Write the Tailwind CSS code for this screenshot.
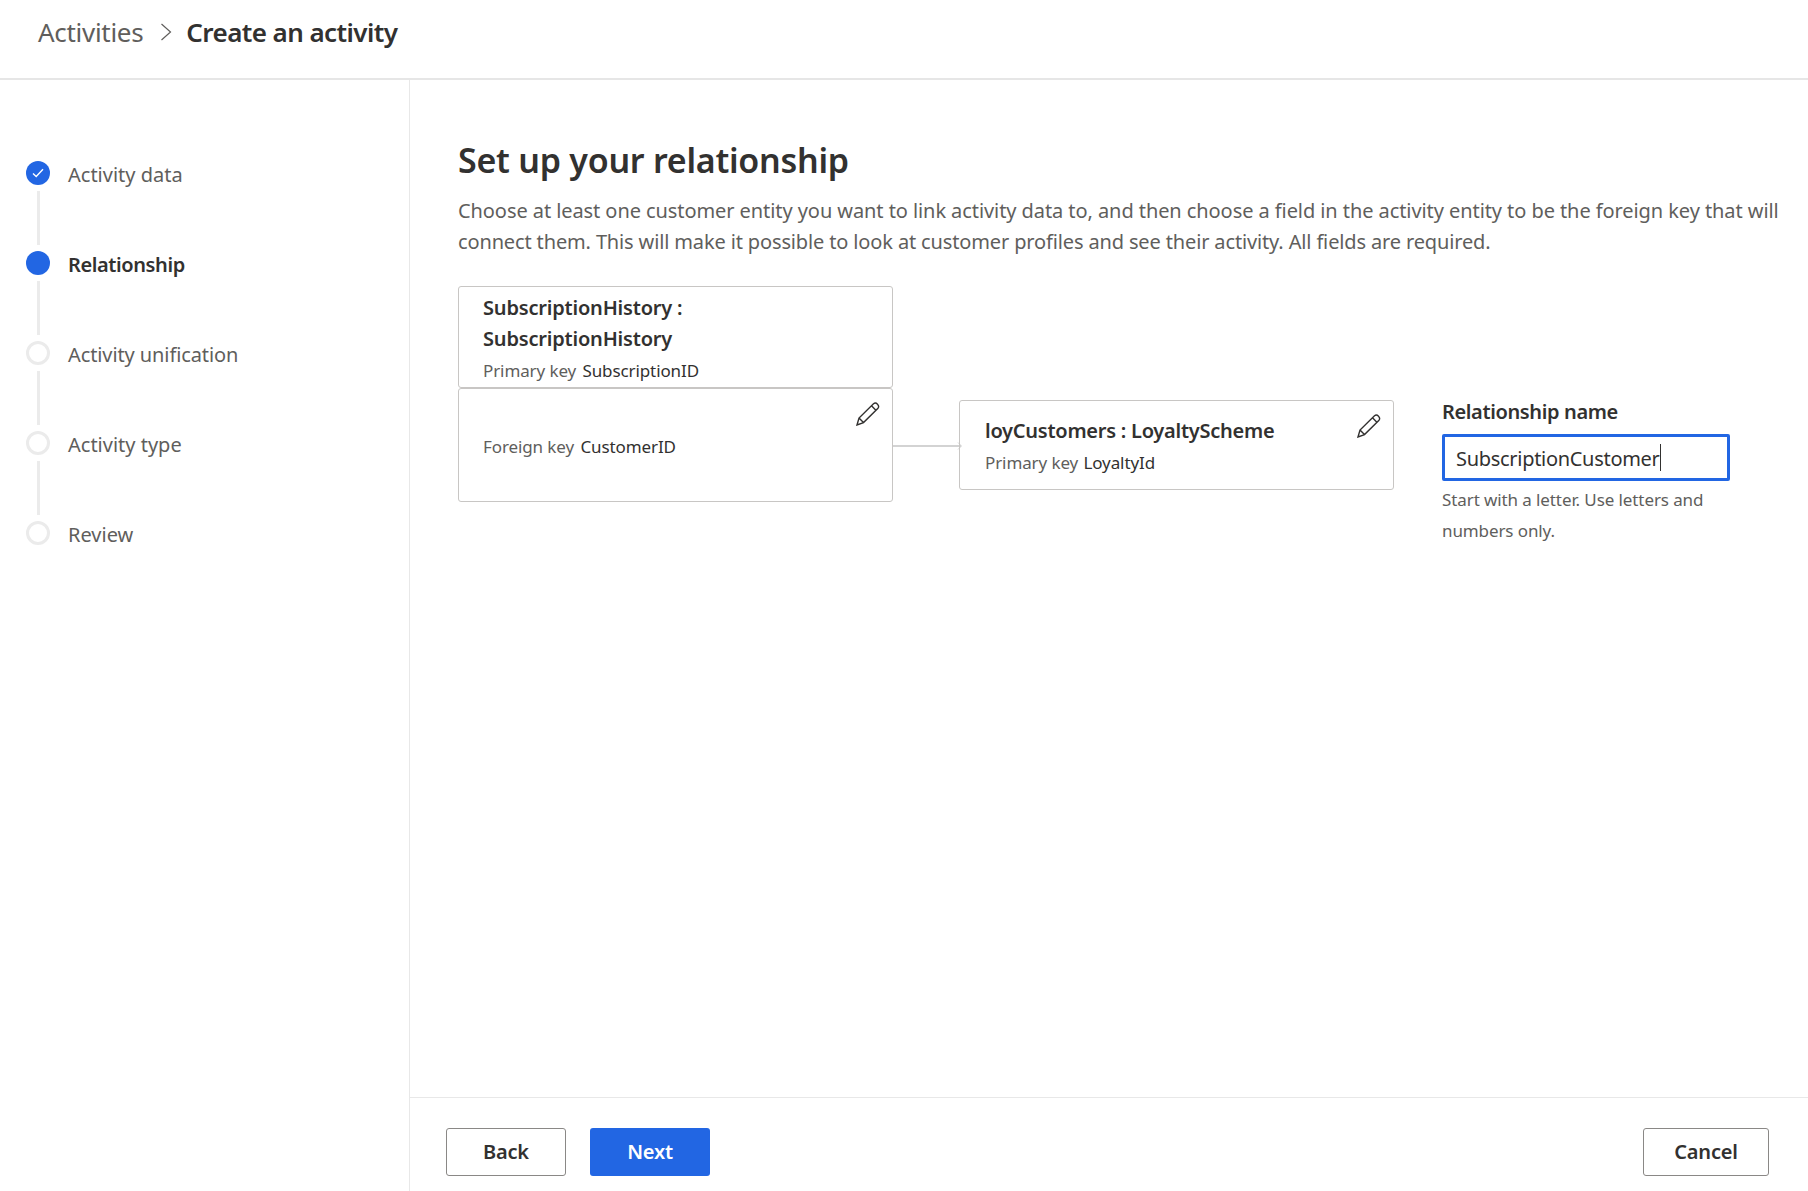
<!DOCTYPE html>
<html lang="en">
<head>
    <meta charset="UTF-8">
    <title>Create an activity</title>
    <script src="https://cdn.jsdelivr.net/npm/@tailwindcss/browser@4"></script>
</head>
<body class="bg-white font-['Noto_Sans','Open_Sans',sans-serif] text-[#323130]">
    <div class="flex h-[1191px] w-[1808px] flex-col overflow-hidden">

        <!-- Breadcrumb -->
        <header class="flex h-[80px] items-center border-b-2 border-[#e6e6e6] pb-[14px] pl-[38px] text-[26px]">
            <span class="tracking-[-0.3px] text-[#605e5c]">Activities</span>
            <svg class="ml-[17px] mr-[14px] h-[18px] w-[12px]" viewBox="0 0 12 18" fill="none" stroke="#605e5c" stroke-width="1.2"><path d="M1.5 1l9 8-9 8"/></svg>
            <span class="font-semibold tracking-[-0.58px]">Create an activity</span>
        </header>

        <div class="flex min-h-0 flex-1">

            <!-- Steps -->
            <aside class="w-[410px] shrink-0 border-r border-[#e8e8e8] pl-[26px] pt-[81px] text-[20px] text-[#605e5c]">
                <div class="flex h-[24px] items-center gap-[18px]">
                    <span class="flex h-[24px] w-[24px] items-center justify-center rounded-full bg-[#2266e3]">
                        <svg class="h-[10px] w-[12px]" viewBox="0 0 12 10" fill="none" stroke="#fff" stroke-width="1.4"><path d="M1 5.5l3.2 3L11 1.2"/></svg>
                    </span>
                    <span class="pt-[4px]">Activity data</span>
                </div>
                <div class="my-[6px] ml-[11px] h-[54px] w-[3px] bg-[#ebebeb]"></div>
                <div class="flex h-[24px] items-center gap-[18px]">
                    <span class="h-[24px] w-[24px] rounded-full bg-[#2266e3]"></span>
                    <span class="pt-[4px] font-semibold tracking-[-0.4px] text-[#323130]">Relationship</span>
                </div>
                <div class="my-[6px] ml-[11px] h-[54px] w-[3px] bg-[#ebebeb]"></div>
                <div class="flex h-[24px] items-center gap-[18px]">
                    <span class="h-[24px] w-[24px] rounded-full border-[3px] border-[#ebebeb]"></span>
                    <span class="pt-[4px] tracking-[-0.1px]">Activity unification</span>
                </div>
                <div class="my-[6px] ml-[11px] h-[54px] w-[3px] bg-[#ebebeb]"></div>
                <div class="flex h-[24px] items-center gap-[18px]">
                    <span class="h-[24px] w-[24px] rounded-full border-[3px] border-[#ebebeb]"></span>
                    <span class="pt-[4px]">Activity type</span>
                </div>
                <div class="my-[6px] ml-[11px] h-[54px] w-[3px] bg-[#ebebeb]"></div>
                <div class="flex h-[24px] items-center gap-[18px]">
                    <span class="h-[24px] w-[24px] rounded-full border-[3px] border-[#ebebeb]"></span>
                    <span class="pt-[4px]">Review</span>
                </div>
            </aside>

            <main class="flex min-w-0 flex-1 flex-col">
                <div class="flex-1 pl-[48px] pt-[56px]">
                    <h1 class="text-[34px] font-semibold leading-[48px] tracking-[-0.25px]">Set up your relationship</h1>
                    <p class="mt-[11px] w-[1340px] text-[20px] leading-[31px] text-[#605e5c]">
                        <span class="block tracking-[-0.075px]">Choose at least one customer entity you want to link activity data to, and then choose a field in the activity entity to be the foreign key that will</span>
                        <span class="block tracking-[-0.14px]">connect them. This will make it possible to look at customer profiles and see their activity. All fields are required.</span>
                    </p>

                    <div class="mt-[29px] flex items-start">
                        <div class="w-[435px]">
                            <div class="h-[102px] rounded-[3px] border border-[#c8c6c4] pl-[24px] pt-[5px] leading-[31px]">
                                <div class="w-[260px] text-[20px] font-semibold tracking-[-0.19px]">SubscriptionHistory : SubscriptionHistory</div>
                                <div class="mt-[1px] text-[17px] tracking-[-0.1px] text-[#605e5c]">Primary key <span class="ml-[2px] text-[#323130]">SubscriptionID</span></div>
                            </div>
                            <div class="relative flex h-[114px] items-center rounded-[3px] border border-[#c8c6c4] pl-[24px] pt-[4px] text-[17px] tracking-[-0.1px] text-[#605e5c]">
                                <div>Foreign key <span class="ml-[2px] text-[#323130]">CustomerID</span></div>
                                <svg class="absolute right-[12px] top-[13px] h-[24px] w-[24px]" viewBox="0 0 24 24" fill="none" stroke="#323130" stroke-width="1.4"><path d="M1 23l2-7L17.5 1.8q2-1.6 4 .4t.5 4L7.5 20.6zM3 16l4.5 4.6M15.5 3.8l4.6 4.6"/></svg>
                            </div>
                        </div>

                        <svg class="mt-[151px] h-[16px] w-[66px] shrink-0 overflow-visible" viewBox="0 0 66 16" fill="none"><path d="M0 9h68" stroke="#c4c4c4" stroke-width="1.5"/><path d="M65 5.5l3.5 3.5L65 12.5" stroke="#d4d4d4"/></svg>

                        <div class="relative mt-[114px] h-[90px] w-[435px] rounded-[3px] border border-[#c8c6c4] pl-[25px] pt-[14px] leading-[31px]">
                            <div class="text-[20px] font-semibold tracking-[-0.25px]">loyCustomers : LoyaltyScheme</div>
                            <div class="mt-[1px] text-[17px] tracking-[-0.1px] text-[#605e5c]">Primary key <span class="ml-[1px] text-[#323130]">LoyaltyId</span></div>
                            <svg class="absolute right-[12px] top-[13px] h-[24px] w-[24px]" viewBox="0 0 24 24" fill="none" stroke="#323130" stroke-width="1.4"><path d="M1 23l2-7L17.5 1.8q2-1.6 4 .4t.5 4L7.5 20.6zM3 16l4.5 4.6M15.5 3.8l4.6 4.6"/></svg>
                        </div>

                        <div class="ml-[48px] mt-[110px] w-[288px]">
                            <div class="text-[20px] font-semibold leading-[32px] tracking-[-0.37px]">Relationship name</div>
                            <div class="mt-[6px] flex h-[47px] items-center rounded-[2px] border-[3px] border-[#2266e3] pl-[11px] pt-[3px] text-[20px] tracking-[-0.3px]">SubscriptionCustomer<span class="-mt-[3px] h-[27px] w-px bg-[#323130]"></span></div>
                            <div class="mt-[3px] text-[17px] leading-[31px] tracking-[-0.1px] text-[#605e5c]">Start with a letter. Use letters and numbers only.</div>
                        </div>
                    </div>
                </div>

                <!-- Footer buttons -->
                <footer class="flex h-[94px] items-start justify-between border-t border-[#e8e8e8] pl-[36px] pr-[39px] pt-[30px] text-[20px] font-semibold tracking-[-0.2px]">
                    <div class="flex gap-[24px]">
                        <button class="h-[48px] w-[120px] rounded-[3px] border border-[#8a8886] bg-white">Back</button>
                        <button class="h-[48px] w-[120px] rounded-[3px] bg-[#2266e3] text-white">Next</button>
                    </div>
                    <button class="h-[48px] w-[126px] rounded-[3px] border border-[#8a8886] bg-white">Cancel</button>
                </footer>
            </main>
        </div>
    </div>
</body>
</html>
